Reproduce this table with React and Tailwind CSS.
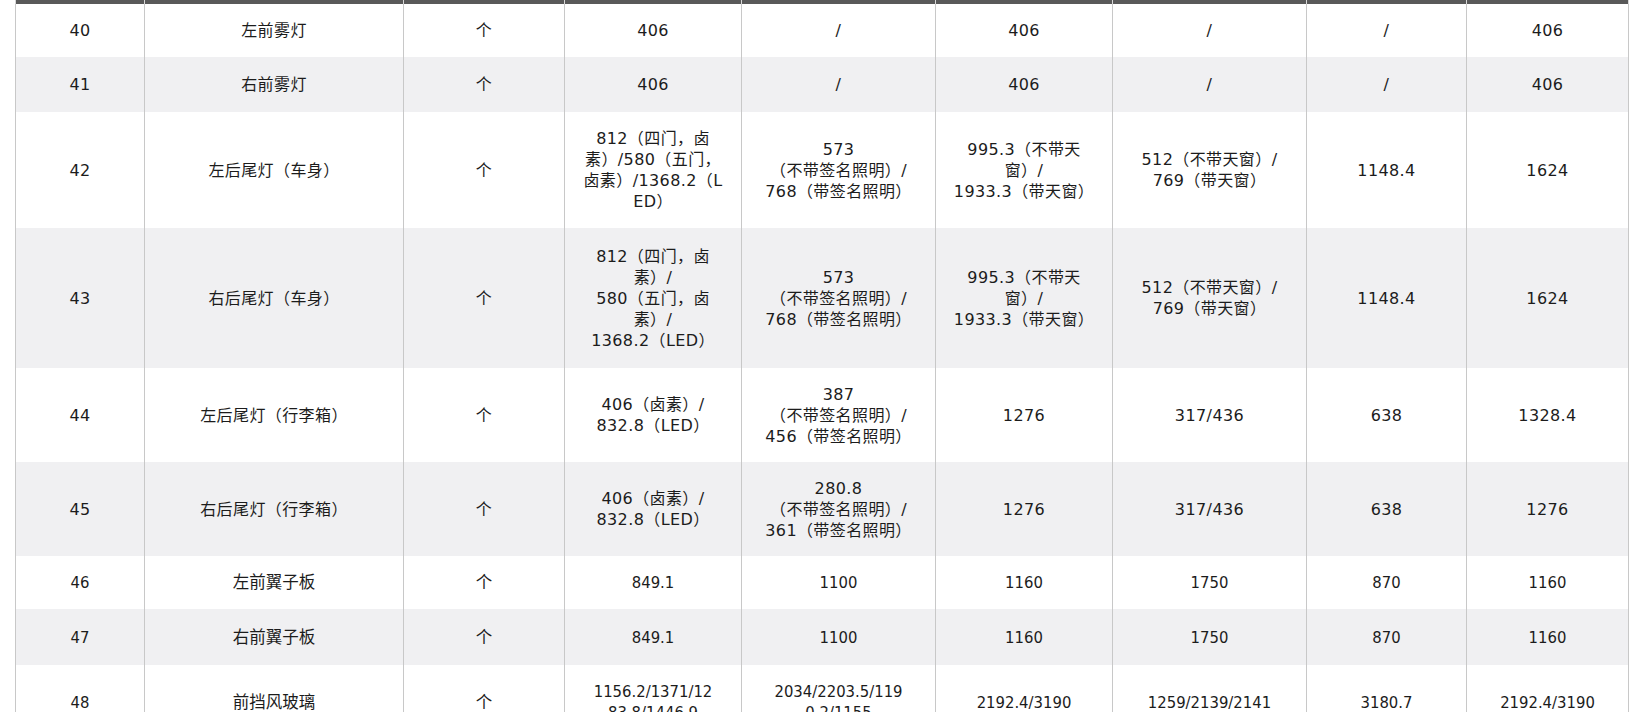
import React from "react";

const cols = [
  "w-[129px]",
  "w-[259px]",
  "w-[161px]",
  "w-[177px]",
  "w-[194px]",
  "w-[177px]",
  "w-[194px]",
  "w-[160px]",
  "w-[162px]",
];

// each cell is a string or a list of lines (the table breaks them this way)
const rows = [
  { h: "h-[53px]", cells: ["40", "左前雾灯", "个", "406", "/", "406", "/", "/", "406"] },
  { h: "h-[55px]", cells: ["41", "右前雾灯", "个", "406", "/", "406", "/", "/", "406"] },
  {
    h: "h-[116px]",
    cells: [
      "42",
      "左后尾灯（车身）",
      "个",
      ["812（四门，卤", "素）/580（五门，", "卤素）/1368.2（L", "ED）"],
      ["573", "（不带签名照明）/", "768（带签名照明）"],
      ["995.3（不带天", "窗）/", "1933.3（带天窗）"],
      ["512（不带天窗）/", "769（带天窗）"],
      "1148.4",
      "1624",
    ],
  },
  {
    h: "h-[140px]",
    cells: [
      "43",
      "右后尾灯（车身）",
      "个",
      ["812（四门，卤", "素）/", "580（五门，卤", "素）/", "1368.2（LED）"],
      ["573", "（不带签名照明）/", "768（带签名照明）"],
      ["995.3（不带天", "窗）/", "1933.3（带天窗）"],
      ["512（不带天窗）/", "769（带天窗）"],
      "1148.4",
      "1624",
    ],
  },
  {
    h: "h-[94px]",
    cells: [
      "44",
      "左后尾灯（行李箱）",
      "个",
      ["406（卤素）/", "832.8（LED）"],
      ["387", "（不带签名照明）/", "456（带签名照明）"],
      "1276",
      "317/436",
      "638",
      "1328.4",
    ],
  },
  {
    h: "h-[94px]",
    cells: [
      "45",
      "右后尾灯（行李箱）",
      "个",
      ["406（卤素）/", "832.8（LED）"],
      ["280.8", "（不带签名照明）/", "361（带签名照明）"],
      "1276",
      "317/436",
      "638",
      "1276",
    ],
  },
  { h: "h-[53px]", narrow: true, cells: ["46", "左前翼子板", "个", "849.1", "1100", "1160", "1750", "870", "1160"] },
  { h: "h-[56px]", narrow: true, cells: ["47", "右前翼子板", "个", "849.1", "1100", "1160", "1750", "870", "1160"] },
  {
    h: "h-[74px]",
    narrow: true,
    cells: [
      "48",
      "前挡风玻璃",
      "个",
      ["1156.2/1371/12", "83.8/1446.9"],
      ["2034/2203.5/119", "0.2/1155"],
      "2192.4/3190",
      "1259/2139/2141",
      "3180.7",
      "2192.4/3190",
    ],
  },
];

function Cell({ value }) {
  const lines = Array.isArray(value) ? value : [value];
  return lines.map((l, i) => (
    <div key={i} className="whitespace-nowrap">
      {l}
    </div>
  ));
}

export default function App() {
  return (
    <div className="min-h-screen bg-white pl-[15px] pr-[17px]">
      <table className="w-[1613px] table-fixed border-collapse text-[#1c1c1c]">
        <colgroup>
          {cols.map((c, i) => (
            <col key={i} className={c} />
          ))}
        </colgroup>
        <thead>
          <tr className="h-[4px] bg-[#595959]">
            {cols.map((c, i) => (
              <th key={i} className="p-0 border-x border-[#d8d8d8]" />
            ))}
          </tr>
        </thead>
        <tbody>
          {rows.map((r, ri) => (
            <tr key={ri} className={`${r.h} ${ri % 2 === 1 ? "bg-[#f0f0f2]" : "bg-white"}`}>
              {r.cells.map((c, ci) => (
                <td
                  key={ci}
                  className={
                    r.narrow
                      ? "px-2 py-0 text-center align-middle border-x border-[#c8c8c8] text-[16.5px] leading-[21px] font-['DejaVu_Sans_Condensed','Noto_Sans_CJK_SC',sans-serif]"
                      : "px-2 py-0 text-center align-middle border-x border-[#c8c8c8] text-[16px] leading-[21px] tracking-[0.4px] font-['DejaVu_Sans','Noto_Sans_CJK_SC',sans-serif]"
                  }
                >
                  <Cell value={c} />
                </td>
              ))}
            </tr>
          ))}
        </tbody>
      </table>
    </div>
  );
}
